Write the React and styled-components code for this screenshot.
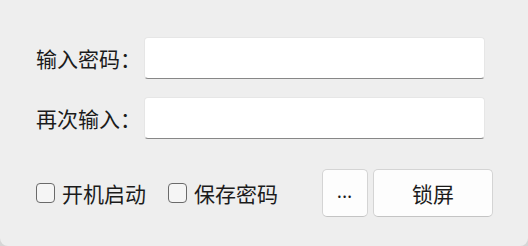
import React from "react";
import styled, { createGlobalStyle } from "styled-components";

const Global = createGlobalStyle`
  html, body { margin: 0; padding: 0; }
  body {
    background: #d6d6d6;
    font-family: "Noto Sans CJK SC", "Noto Sans", sans-serif;
  }
`;

const Window = styled.div`
  width: 528px;
  height: 246px;
  box-sizing: border-box;
  background: #eeeeee;
  border-radius: 0 0 8px 8px;
  padding: 37px 35px 0 36px;
  display: flex;
  flex-direction: column;
  color: #1b1b1b;
  font-size: 21px;
`;

const FormRow = styled.div`
  display: flex;
  align-items: center;
  height: 42px;
  margin-bottom: ${(p) => p.$gap}px;
`;

const Label = styled.span`
  width: 108px;
  line-height: 1;
  white-space: nowrap;
`;

const Field = styled.input`
  width: 341px;
  height: 42px;
  box-sizing: border-box;
  background: #ffffff;
  border: 1px solid #e6e6e6;
  border-bottom: 1px solid #878787;
  border-radius: 4px;
  outline: none;
  padding: 0 10px;
  font: inherit;
`;

const BottomRow = styled.div`
  display: flex;
  align-items: center;
  height: 48px;
`;

const Check = styled.label`
  display: flex;
  align-items: center;
  gap: 7px;
  margin-right: ${(p) => p.$mr}px;
  white-space: nowrap;
  line-height: 1;
`;

const Box = styled.span`
  width: 19px;
  height: 20px;
  box-sizing: border-box;
  border: 1px solid #6a6a6a;
  border-radius: 4px;
  background: #f5f5f5;
`;

const Button = styled.button`
  width: ${(p) => p.$w}px;
  height: 48px;
  box-sizing: border-box;
  background: #fdfdfd;
  border: 1px solid #d4d4d4;
  border-bottom-color: #c4c4c4;
  border-radius: 5px;
  font-family: inherit;
  font-size: 21px;
  color: #1b1b1b;
  padding: 0;
  display: flex;
  align-items: center;
  justify-content: center;
  margin-left: ${(p) => p.$ml}px;
  cursor: default;
`;

const Dots = styled.span`
  font-size: 13px;
  font-weight: 700;
  letter-spacing: 1px;
  line-height: 1;
  transform: translateY(-1px);
`;

export default function App() {
  return (
    <>
      <Global />
      <Window>
        <FormRow $gap={18}>
          <Label>输入密码：</Label>
          <Field type="password" />
        </FormRow>
        <FormRow $gap={30}>
          <Label>再次输入：</Label>
          <Field type="password" />
        </FormRow>
        <BottomRow>
          <Check $mr={22}>
            <Box />
            开机启动
          </Check>
          <Check $mr={0}>
            <Box />
            保存密码
          </Check>
          <Button $w={46} $ml={44}>
            <Dots>...</Dots>
          </Button>
          <Button $w={120} $ml={5}>锁屏</Button>
        </BottomRow>
      </Window>
    </>
  );
}
